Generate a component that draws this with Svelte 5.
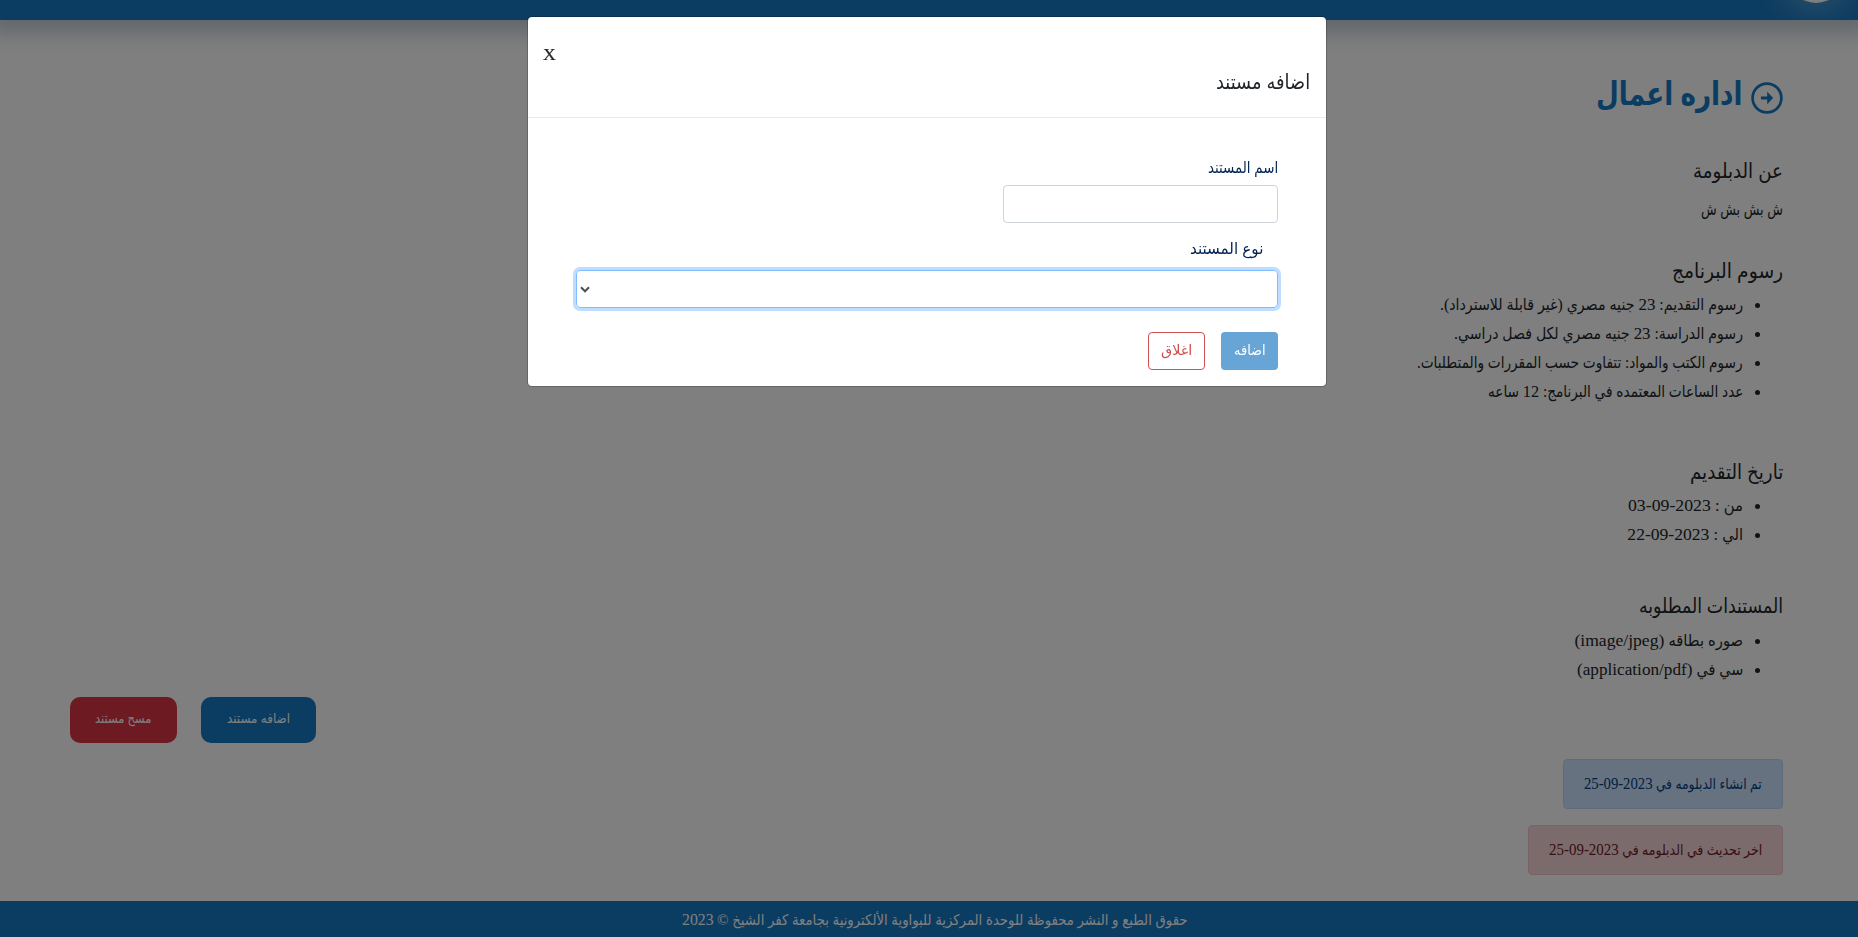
<script>
  const fees = [
    ['رسوم التقديم: 23 جنيه مصري (غير قابلة للاسترداد).', 303],
    ['رسوم الدراسة: 23 جنيه مصري لكل فصل دراسي.', 289],
    ['رسوم الكتب والمواد: تتفاوت حسب المقررات والمتطلبات.', 326],
    ['عدد الساعات المعتمده في البرنامج: 12 ساعه', 256]
  ];
  const dates = [['من : 03-09-2023', 115], ['الي : 22-09-2023', 116]];
  const documents = [['صوره بطاقه (image/jpeg)', 169], ['سي في (application/pdf)', 166]];

  const runs = (text) => text.split(/(\d[\d-]*|\([a-z/]+\))/).filter(Boolean);
  const isLatin = (run) => /^(\d|\([a-z])/.test(run);

  // Condenses a line of text to the given width.
  function fit(node, width) {
    node.style.transform = `scaleX(${width / node.offsetWidth})`;
  }
</script>

{#snippet line(text, width)}
  <span class="line" style:width="{width}px"><span class="fit" use:fit={width}>{#each runs(text) as run}{#if isLatin(run)}<bdi dir="ltr">{run}</bdi>{:else}<span class="ar">{run}</span>{/if}{/each}</span></span>
{/snippet}

{#snippet list(items)}
  <ul>
    {#each items as [text, width]}<li>{@render line(text, width)}</li>{/each}
  </ul>
{/snippet}

<div class="page" dir="rtl">
  <header><div class="logo"></div></header>

  <main>
    <h1>
      <svg viewBox="0 0 32 32" width="32" height="32">
        <circle cx="16" cy="16" r="14.4" fill="none" stroke="currentColor" stroke-width="2.7" />
        <path d="M10 14.5h6.2v-4.7l5.9 6.2-5.9 6.2v-4.7H10z" fill="currentColor" />
      </svg>
      {@render line('اداره اعمال', 146)}
    </h1>

    <section class="about">
      <h2>{@render line('عن الدبلومة', 90)}</h2>
      <p>{@render line('ش بش بش ش', 82)}</p>
    </section>
    <section class="fees">
      <h2>{@render line('رسوم البرنامج', 111)}</h2>
      {@render list(fees)}
    </section>
    <section class="dates">
      <h2>{@render line('تاريخ التقديم', 93)}</h2>
      {@render list(dates)}
    </section>
    <section class="docs">
      <h2>{@render line('المستندات المطلوبه', 144)}</h2>
      {@render list(documents)}
    </section>

    <div class="actions">
      <button class="add">{@render line('اضافه مستند', 63)}</button>
      <button class="remove">{@render line('مسح مستند', 56)}</button>
    </div>

    <div class="alerts">
      <div class="alert info">{@render line('تم انشاء الدبلومه في 25-09-2023', 178)}</div>
      <div class="alert danger">{@render line('اخر تحديث في الدبلومه في 25-09-2023', 213)}</div>
    </div>
  </main>

  <footer>{@render line('حقوق الطبع و النشر محفوظة للوحدة المركزية للبواوية الألكترونية بجامعة كفر الشيخ © 2023', 506)}</footer>
</div>

<div class="backdrop" dir="rtl">
  <div class="modal">
    <div class="modal-header">
      <span class="close">X</span>
      <h2>{@render line('اضافه مستند', 94)}</h2>
    </div>
    <div class="modal-body">
      <div class="label">{@render line('اسم المستند', 70)}</div>
      <input type="text" />
      <div class="label indent">{@render line('نوع المستند', 73)}</div>
      <div class="select">
        <svg viewBox="0 0 10 7" width="10" height="7"><path d="M1 1.3l4 4 4-4" fill="none" stroke="#495057" stroke-width="2" /></svg>
      </div>
      <div class="modal-actions">
        <button class="submit">{@render line('اضافه', 32)}</button>
        <button class="cancel">{@render line('اغلاق', 31)}</button>
      </div>
    </div>
  </div>
</div>

<style>
  :global(body) { margin: 0; overflow: hidden; }
  * { box-sizing: border-box; }
  .page, .backdrop {
    height: 937px;
    font: 17.6px/29px "Liberation Serif", "DejaVu Sans Condensed", "DejaVu Sans", serif;
    color: #212529;
  }
  .page { display: flex; flex-direction: column; background: #fff; overflow: hidden; }
  .line { display: inline-block; white-space: nowrap; text-align: right; }
  .fit { display: inline-block; transform-origin: right; }
  .ar { font-size: .93em; line-height: 1; }
  h1, h2, p, ul { margin: 0; padding: 0; font-weight: 400; }
  button { font-family: inherit; border: 0; padding: 0; display: flex; align-items: center; justify-content: center; }

  header {
    flex: none; height: 20px; background: #1678c2;
    box-shadow: 0 0 22px 12px rgba(8, 59, 99, .27);
    display: flex; align-items: flex-end; padding-right: 14px;
  }
  .logo {
    flex: none; width: 56px; height: 56px; margin-bottom: 17px;
    border-radius: 50%; background: #fff;
    box-shadow: 0 0 40px rgba(255, 255, 255, .5);
  }
  main { flex: 1; display: flex; flex-direction: column; padding: 0 75px 0 70px; }
  h1 {
    display: flex; align-items: center; gap: 9px; height: 50px; margin-top: 52px;
    color: #1678c2; font-size: 35px; font-weight: 700; line-height: 50px;
  }
  h1 svg { position: relative; top: 1px; }
  h1 .line { position: relative; top: -3px; }
  h2 { font-size: 22px; line-height: 32px; height: 32px; }
  .about { margin-top: 33px; height: 100px; }
  .about p { margin-top: 8px; }
  .fees { height: 201px; }
  .dates { height: 134px; }
  .docs { height: 107px; }
  ul { padding-right: 40px; }
  section:not(.about) h2 { margin-bottom: 3px; }
  .docs ul { padding-top: 1px; }
  li { height: 29px; line-height: 29px; }

  .actions { display: flex; justify-content: flex-end; gap: 24px; height: 46px; }
  .actions button { height: 46px; border-radius: 10px; color: #fff; font-size: 14.5px; padding-bottom: 3px; }
  .add { width: 115px; background: #1678c2; }
  .remove { width: 107px; background: #dc3545; }
  .alerts { display: flex; flex-direction: column; align-items: flex-start; gap: 16px; margin-top: 16px; }
  .alert { height: 50px; padding: 0 20px; border: 1px solid; border-radius: 4px; font-size: 16px; line-height: 47px; }
  .info { color: #004085; background: #cce5ff; border-color: #b8daff; }
  .danger { color: #721c24; background: #f8d7da; border-color: #f5c6cb; }
  footer {
    flex: none; height: 36px; background: #1678c2; color: #fff;
    font-size: 16px; line-height: 37px; text-align: center; padding-left: 12px;
  }

  .backdrop {
    position: fixed; inset: 0; background: rgba(0, 0, 0, .5);
    display: flex; justify-content: center; align-items: flex-start; padding: 16px 4px 0 0;
  }
  .modal {
    width: 800px; height: 371px; background: #fff; background-clip: padding-box;
    border: 1px solid rgba(0, 0, 0, .2); border-radius: 5px;
  }
  .modal-header {
    height: 101px; padding: 21px 16px 0 15px; border-bottom: 1px solid #e9ecef;
    display: flex; flex-direction: column;
  }
  .close { align-self: flex-end; height: 28px; line-height: 32px; -webkit-text-stroke: .2px; }
  .modal-body { display: flex; flex-direction: column; align-items: flex-start; padding: 35px 48px 0; }
  .label { height: 29px; color: #012353; }
  .indent { margin: 11px 15px 0 0; }
  input { width: 275px; height: 38px; margin: 3px 0 0; border: 1px solid #ced4da; border-radius: 4px; }
  .select {
    width: 702px; height: 38px; margin-top: 7px; border: 1px solid #80bdff; border-radius: 4px;
    box-shadow: 0 0 0 3px #bfdeff;
    display: flex; align-items: center; justify-content: flex-end; padding-left: 3px;
  }
  .modal-actions { display: flex; gap: 16px; margin-top: 24px; }
  .modal-actions button { width: 57px; height: 38px; border-radius: 4px; font-size: 15px; padding-bottom: 2px; }
  .submit { background: #68a5d7; color: #fff; }
  .modal-actions .cancel { border: 1px solid #d04f50; color: #d04f50; background: #fff; }
</style>
